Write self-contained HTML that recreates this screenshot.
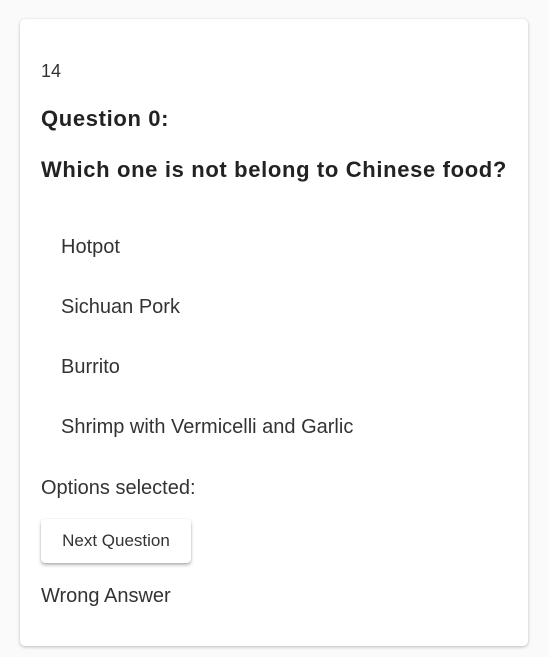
<!DOCTYPE html>
<html><head><style>
html,body{margin:0;padding:0;background:#fafafa;width:549px;height:657px;overflow:hidden;font-family:"Liberation Sans",Arial,sans-serif;color:#333}
.card{position:absolute;left:20px;top:19px;width:508px;height:627px;background:#fff;border-radius:5px;box-shadow:0 1px 3px rgba(0,0,0,.25)}
.t{position:absolute;left:41px;white-space:nowrap;line-height:1}
.b{font-weight:bold;font-size:22px;letter-spacing:0.65px;color:#222}
.o{left:61px;font-size:20px}
.btn{position:absolute;left:41px;top:519px;width:150px;height:44px;background:#fff;border-radius:4px;box-shadow:0 2px 3px rgba(0,0,0,.3),0 0 1px rgba(0,0,0,.15);font-size:17px;line-height:44px;text-align:center;color:#333}
</style></head><body>
<div class="card"></div>
<div class="t" style="top:62px;font-size:18px">14</div>
<div class="t b" style="top:108px">Question 0:</div>
<div class="t b" style="top:159px">Which one is not belong to Chinese food?</div>
<div class="t o" style="top:237px">Hotpot</div>
<div class="t o" style="top:297px">Sichuan Pork</div>
<div class="t o" style="top:357px">Burrito</div>
<div class="t o" style="top:417px">Shrimp with Vermicelli and Garlic</div>
<div class="t" style="top:478px;font-size:20px">Options selected:</div>
<div class="btn">Next Question</div>
<div class="t" style="top:586px;font-size:20px">Wrong Answer</div>
</body></html>
